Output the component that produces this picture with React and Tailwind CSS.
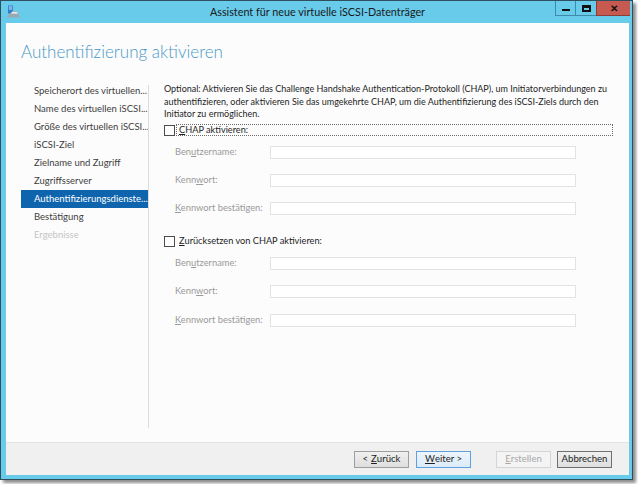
import React from "react";

const font = { fontFamily: 'Lato, "Noto Sans", sans-serif' };

function Field({ label, u, top }) {
  const idx = label.indexOf(u);
  return (
    <div className="flex items-center h-[13px]" style={{ marginTop: top }}>
      <div className="w-[106px] pl-[11px] text-[9.3px] text-[#9a9a9a] leading-none whitespace-nowrap">
        {label.slice(0, idx)}
        <span className="underline">{u}</span>
        {label.slice(idx + u.length)}
      </div>
      <div className="w-[306px] h-[13px] border border-[#e3e3e3] bg-white" />
    </div>
  );
}

function Check({ children, focus, top }) {
  return (
    <div className="flex items-center h-[13px]" style={{ marginTop: top }}>
      <div className="w-[11px] h-[11px] border border-[#4d4d4d] bg-white shrink-0" />
      <div
        className={
          "ml-px h-[12px] flex items-center pl-[2px] text-[9.2px] text-[#1e1e1e] leading-none whitespace-nowrap " +
          (focus ? "w-[437px] border border-dotted border-[#6b6b6b]" : "border border-transparent")
        }
      >
        {children}
      </div>
    </div>
  );
}

function Btn({ children, kind }) {
  const cls =
    kind === "primary"
      ? "border-[#5fa0e0] bg-gradient-to-b from-[#eef5fc] to-[#dcebf9] text-[#1e1e1e]"
      : kind === "disabled"
      ? "border-[#d5d5d5] bg-[#f4f4f4] text-[#a8a8a8]"
      : kind === "dark"
      ? "border-[#6f6f6f] bg-gradient-to-b from-[#f0f0f0] to-[#dedede] text-[#1e1e1e]"
      : "border-[#9e9e9e] bg-gradient-to-b from-[#f0f0f0] to-[#dedede] text-[#1e1e1e]";
  return (
    <div
      className={
        "w-[55px] h-[17px] border flex items-center justify-center text-[9.6px] leading-none " +
        cls
      }
    >
      {children}
    </div>
  );
}

export default function App() {
  const nav = [
    "Speicherort des virtuellen...",
    "Name des virtuellen iSCSI...",
    "Größe des virtuellen iSCSI...",
    "iSCSI-Ziel",
    "Zielname und Zugriff",
    "Zugriffsserver",
    "Authentifizierungsdienste...",
    "Bestätigung",
    "Ergebnisse",
  ];
  return (
    <div className="w-[638px] h-[484px] bg-white" style={font}>
      <div className="w-[633px] h-[480px] border border-[#2f4f5f] bg-[#68cbea] flex flex-col pl-[5px] pr-[3px] pb-[4px] shadow-[3px_3px_3px_rgba(0,0,0,0.45)]">
        {/* title bar */}
        <div className="h-[22px] flex items-start relative shrink-0">
          <svg width="13" height="13" viewBox="0 0 13 13" className="mt-[4px] ml-px">
            <rect x="1" y="0.5" width="5" height="8" fill="#2e7fc8" />
            <rect x="1.8" y="1.5" width="3.4" height="1" fill="#cfe6fb" />
            <rect x="1.8" y="3.5" width="3.4" height="1" fill="#cfe6fb" />
            <path d="M3 8.5 L10 8.5 L12.5 11 L12.5 12.5 L0.5 12.5 L0.5 11 Z" fill="#9aa9b3" />
            <path d="M5 6.5 L10 6.5 L11.5 9 L3.5 9 Z" fill="#e5e9ec" stroke="#8a98a2" strokeWidth="0.5" />
          </svg>
          <div className="absolute left-0 right-0 top-[4px] text-center text-[10.8px] leading-[14px] text-[#1a1a1a]">
            Assistent für neue virtuelle iSCSI-Datenträger
          </div>
          <div className="ml-auto flex h-[15px] mr-[-1px] relative">
            <div className="w-[20px] h-[15px] border-l border-b border-[#3f8aa8] flex items-end justify-center pb-[4px]">
              <div className="w-[8px] h-[2px] bg-[#111]" />
            </div>
            <div className="w-[21px] h-[15px] border-l border-b border-[#3f8aa8] flex items-center justify-center">
              <div className="w-[9px] h-[7px] border-2 border-[#111] border-t-[3px]" />
            </div>
            <div className="w-[34px] h-[15px] bg-[#c75a50] border-l border-b border-[#8c3d37] flex items-center justify-center text-[10px] font-bold text-[#111] leading-none">
              ✕
            </div>
          </div>
        </div>
        {/* content */}
        <div className="flex-1 bg-[#fcfcfc] flex flex-col min-h-0">
          <div className="pl-[15px] pt-[17px] h-[59px] text-[17px] font-light text-[#4a98c6] leading-[24px]">
            Authentifizierung aktivieren
          </div>
          <div className="flex flex-1">
            <div className="w-[142px] pl-[15px] flex flex-col">
              {nav.map((n, i) => (
                <div
                  key={n}
                  className={
                    "h-[18px] pl-[13px] flex items-center text-[9.5px] leading-none whitespace-nowrap overflow-hidden " +
                    (i === 6
                      ? "bg-[#0f65ad] text-white"
                      : i === 8
                      ? "text-[#c4c4c4]"
                      : "text-[#3c3c3c]")
                  }
                >
                  {n}
                </div>
              ))}
            </div>
            <div className="w-px bg-[#dcdcdc] mt-[3px] mb-[14px]" />
            <div className="flex-1 pl-[15px] pt-px">
              <div className="text-[9px] leading-[12.5px] text-[#1e1e1e] whitespace-nowrap">
                Optional: Aktivieren Sie das Challenge Handshake Authentication-Protokoll (CHAP), um Initiatorverbindungen zu
                <br />
                authentifizieren, oder aktivieren Sie das umgekehrte CHAP, um die Authentifizierung des iSCSI-Ziels durch den
                <br />
                Initiator zu ermöglichen.
              </div>
              <Check focus top="3px">
                <span className="underline">C</span>HAP aktivieren:
              </Check>
              <Field label="Benutzername:" u="u" top="9px" />
              <Field label="Kennwort:" u="w" top="15px" />
              <Field label="Kennwort bestätigen:" u="K" top="15px" />
              <Check top="20px">
                <span className="underline">Z</span>urücksetzen von CHAP aktivieren:
              </Check>
              <Field label="Benutzername:" u="u" top="9px" />
              <Field label="Kennwort:" u="w" top="15px" />
              <Field label="Kennwort bestätigen:" u="K" top="16px" />
            </div>
          </div>
          <div className="h-[33px] bg-[#f0f0f0] border-t border-[#e4e4e4] flex items-center justify-end pr-[17px]">
            <Btn>
              &lt; <span className="underline ml-[3px]">Z</span>urück
            </Btn>
            <div className="w-[7px]" />
            <Btn kind="primary">
              <span className="underline">W</span>eiter &gt;
            </Btn>
            <div className="w-[25px]" />
            <Btn kind="disabled">
              <span className="underline">E</span>rstellen
            </Btn>
            <div className="w-[6px]" />
            <Btn kind="dark">Abbrechen</Btn>
          </div>
        </div>
      </div>
    </div>
  );
}
